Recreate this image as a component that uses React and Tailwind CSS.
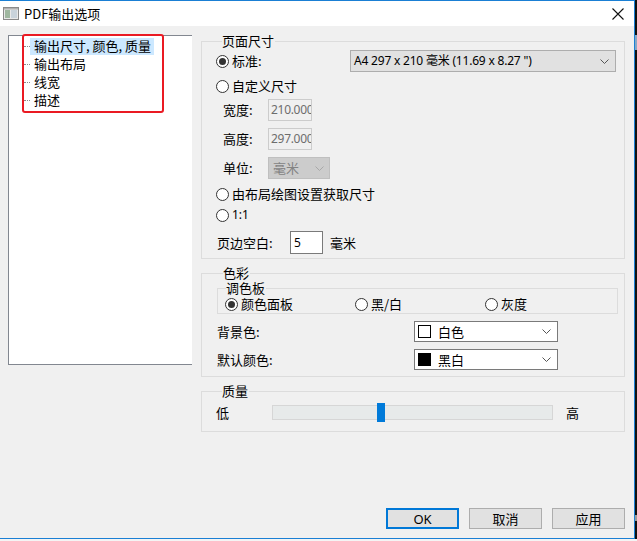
import React from "react";

function Radio({ checked }) {
  return (
    <span className="w-[13px] h-[13px] rounded-full border border-[#333333] bg-white flex items-center justify-center shrink-0">
      {checked && <span className="w-[7px] h-[7px] rounded-full bg-[#333333]" />}
    </span>
  );
}

function Chevron({ color = "#555555" }) {
  return (
    <svg width="9" height="5" viewBox="0 0 9 5" className="shrink-0">
      <polyline points="0.5,0.5 4.5,4.5 8.5,0.5" fill="none" stroke={color} strokeWidth="1" />
    </svg>
  );
}

function GroupTitle({ children, className = "ml-[6px]" }) {
  return (
    <div className={`-mt-[8px] h-[14px] leading-[14px] w-fit bg-[#f0f0f0] pr-[1px] ${className}`}>{children}</div>
  );
}

function ColorSelect({ swatch, label }) {
  return (
    <div className="w-[144px] h-[21px] border border-[#7a7a7a] bg-white flex items-center pl-[3px] pr-[6px]">
      <span className={`w-[13px] h-[13px] border border-black ${swatch}`} />
      <span className="ml-[7px] flex-1">{label}</span>
      <Chevron />
    </div>
  );
}

export default function App() {
  const tree = ["输出尺寸, 颜色, 质量", "输出布局", "线宽", "描述"];

  return (
    <div className="w-[637px] h-[541px] flex flex-col bg-[#f4f4f4] text-[13px] leading-[16px] text-black font-['Noto_Sans_CJK_SC',sans-serif] overflow-hidden">
      <div className="h-[539px] flex">
        <div className="w-[635px] h-[539px] border-t border-r border-b border-[#1a7fd4] bg-[#f0f0f0] flex flex-col">
          {/* title bar */}
          <div className="h-[25px] bg-white flex items-center shrink-0">
            <svg width="16" height="13" viewBox="0 0 16 13" className="ml-[3px]">
              <rect x="0.5" y="0.5" width="15" height="12" fill="#e8e8e8" stroke="#8a8a8a" />
              <rect x="2" y="3" width="5" height="8" fill="#9fb7a0" />
              <rect x="8" y="3" width="6" height="8" fill="#c9d3db" />
              <rect x="1" y="1" width="14" height="1.5" fill="#b0b0b0" />
            </svg>
            <span className="ml-[5px] text-[13px]">PDF输出选项</span>
            <svg width="12" height="12" viewBox="0 0 12 12" className="ml-auto mr-[10px]">
              <path d="M0.5 0.5 L11.5 11.5 M11.5 0.5 L0.5 11.5" stroke="#111" strokeWidth="1.1" />
            </svg>
          </div>

          {/* body */}
          <div className="flex pl-[8px] pt-[8px] flex-1">
            {/* tree */}
            <div className="relative mt-[1px] w-[184px] h-[330px] bg-white border-t border-l border-b border-[#828790] pt-[1px]">
              {tree.map((t, i) => (
                <div key={t} className="h-[18px] flex items-center pl-[15px] whitespace-nowrap">
                  <span className="w-[6px] border-t border-dotted border-[#8a8a8a]" />
                  <span className={`px-[4px] h-[17px] flex items-center ${i === 0 ? "bg-[#cce8ff] w-[124px]" : ""}`}>{t}</span>
                </div>
              ))}
              <div className="absolute left-[13px] top-[-2px] w-[142px] h-[79px] border-2 border-[#ea1a23] rounded-[3px]" />
            </div>

            {/* right column */}
            <div className="ml-[9px] w-[424px] flex flex-col">
              {/* page size */}
              <div className="mt-[7px] border border-[#dcdcdc] pl-[14px] pb-[4px]">
                <GroupTitle>页面尺寸</GroupTitle>
                <div className="mt-[2px] h-[22px] flex items-center">
                  <div className="w-[134px] flex items-center gap-[3px]">
                    <Radio checked />
                    <span>标准:</span>
                  </div>
                  <div className="w-[266px] h-[22px] bg-[#e1e1e1] border border-[#adadad] flex items-center pl-[3px] pr-[6px]">
                    <span className="flex-1 font-['Noto_Sans','Noto_Sans_CJK_SC',sans-serif] text-[12px] tracking-[-0.2px]">A4 297 x 210 毫米 (11.69 x 8.27 ")</span>
                    <Chevron />
                  </div>
                </div>
                <div className="mt-[6px] h-[16px] flex items-center gap-[3px]">
                  <Radio />
                  <span>自定义尺寸</span>
                </div>
                {[
                  ["宽度:", "210.000"],
                  ["高度:", "297.000"],
                ].map(([l, v], i) => (
                  <div key={l} className={`${i === 0 ? "mt-[5px]" : "mt-[7px]"} h-[22px] flex items-center ml-[7px]`}>
                    <span className="w-[45px]">{l}</span>
                    <div className="w-[44px] h-[22px] border border-[#cccccc] bg-[#f0f0f0] text-[#6d6d6d] flex items-center pl-[2px] overflow-hidden whitespace-nowrap font-['Noto_Sans',sans-serif] text-[12px] tracking-[-0.3px]">
                      {v}
                    </div>
                  </div>
                ))}
                <div className="mt-[7px] h-[22px] flex items-center ml-[7px]">
                  <span className="w-[45px]">单位:</span>
                  <div className="w-[62px] h-[22px] border border-[#bfbfbf] bg-[#cccccc] text-[#838383] flex items-center pl-[4px] pr-[5px]">
                    <span className="flex-1">毫米</span>
                    <Chevron color="#a8a8a8" />
                  </div>
                </div>
                <div className="mt-[7px] h-[16px] flex items-center gap-[3px]">
                  <Radio />
                  <span>由布局绘图设置获取尺寸</span>
                </div>
                <div className="mt-[5px] h-[16px] flex items-center gap-[3px]">
                  <Radio />
                  <span className="font-['Noto_Sans',sans-serif] text-[12px]">1:1</span>
                </div>
                <div className="mt-[8px] h-[23px] flex items-center ml-[1px]">
                  <span className="w-[73px]">页边空白:</span>
                  <div className="w-[33px] h-[23px] border border-[#7a7a7a] bg-white flex items-center pl-[3px] font-['Noto_Sans',sans-serif] text-[12px]">5</div>
                  <span className="ml-[7px]">毫米</span>
                </div>
              </div>

              {/* colour */}
              <div className="mt-[14px] border border-[#dcdcdc] pl-[15px] pb-[6px]">
                <GroupTitle>色彩</GroupTitle>
                <div className="mt-[8px] w-[401px] border border-[#dcdcdc] pl-[7px] pb-[1px]">
                  <GroupTitle className="ml-[1px]">调色板</GroupTitle>
                  <div className="mt-[1px] h-[16px] flex items-center">
                    <div className="w-[130px] flex items-center gap-[3px]">
                      <Radio checked />
                      <span>颜色面板</span>
                    </div>
                    <div className="w-[130px] flex items-center gap-[3px]">
                      <Radio />
                      <span>黑/白</span>
                    </div>
                    <div className="flex items-center gap-[3px]">
                      <Radio />
                      <span>灰度</span>
                    </div>
                  </div>
                </div>
                <div className="mt-[7px] h-[21px] flex items-center">
                  <span className="w-[197px]">背景色:</span>
                  <ColorSelect swatch="bg-white" label="白色" />
                </div>
                <div className="mt-[7px] h-[21px] flex items-center">
                  <span className="w-[197px]">默认颜色:</span>
                  <ColorSelect swatch="bg-black" label="黑白" />
                </div>
              </div>

              {/* quality */}
              <div className="mt-[14px] border border-[#dcdcdc] pl-[14px] pb-[9px]">
                <GroupTitle>质量</GroupTitle>
                <div className="mt-[5px] h-[19px] flex items-center">
                  <span className="w-[56px]">低</span>
                  <div className="relative w-[281px] h-[15px] bg-[#e7eaea] border border-[#d6d6d6]">
                    <span className="absolute left-[104px] top-[-3px] w-[8px] h-[19px] bg-[#007ad9]" />
                  </div>
                  <span className="ml-[13px]">高</span>
                </div>
              </div>

              {/* buttons */}
              <div className="mt-[76px] flex justify-end gap-[10px]">
                <button className="w-[73px] h-[21px] bg-[#e1e1e1] border-2 border-[#0078d7] flex items-center justify-center font-['Noto_Sans',sans-serif] text-[13px]">OK</button>
                <button className="w-[73px] h-[21px] bg-[#e1e1e1] border border-[#adadad] flex items-center justify-center">取消</button>
                <button className="w-[73px] h-[21px] bg-[#e1e1e1] border border-[#adadad] flex items-center justify-center">应用</button>
              </div>
            </div>
          </div>
        </div>
        <div className="w-[2px] h-[539px] bg-[#111111] flex flex-col">
          <span className="mt-[35px] h-[15px] bg-[#8aa7c4]" />
          <span className="mt-[465px] h-[6px] bg-[#9a9a9a]" />
        </div>
      </div>
    </div>
  );
}
